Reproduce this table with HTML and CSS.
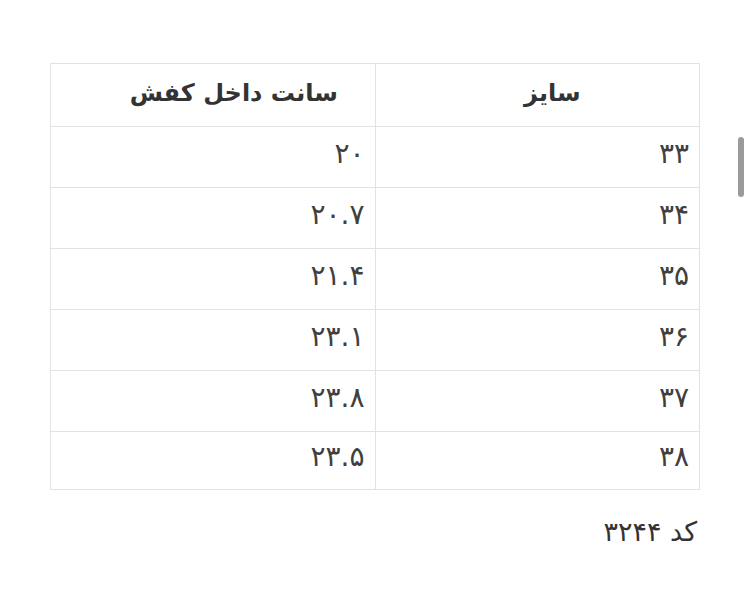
FILE: index.html
```html
<!DOCTYPE html>
<html lang="fa" dir="rtl">
<head>
<meta charset="utf-8">
<link rel="stylesheet" href="styles.css">
</head>
<body>
<div class="page">
  <table class="sizes">
    <colgroup><col class="col"><col class="col"></colgroup>
    <thead>
      <tr><th class="c1">سایز</th><th class="c2">سانت داخل کفش</th></tr>
    </thead>
    <tbody>
      <tr><td>۳۳</td><td>۲۰</td></tr>
      <tr><td>۳۴</td><td>۲۰.۷</td></tr>
      <tr><td>۳۵</td><td>۲۱.۴</td></tr>
      <tr><td>۳۶</td><td>۲۳.۱</td></tr>
      <tr><td>۳۷</td><td>۲۳.۸</td></tr>
      <tr><td>۳۸</td><td>۲۳.۵</td></tr>
    </tbody>
  </table>
  <p class="code">کد ۳۲۴۴</p>
</div>
<div class="scrollbar"></div>
</body>
</html>
```
FILE: styles.css
```css
html, body {
  margin: 0;
  padding: 0;
  background: #fff;
}
body {
  font-family: "DejaVu Sans", "Noto Sans", sans-serif;
  color: #3a3a3a;
}
.page {
  padding: 63px 50px 0 50px;
}
.sizes {
  width: 650px;
  border-collapse: collapse;
  table-layout: fixed;
}
.sizes .col { width: 50%; }
.sizes th, .sizes td {
  box-sizing: border-box;
  border: 1px solid #e2e2e2;
}
.sizes th {
  height: 63px;
  font-size: 24px;
  font-weight: bold;
  color: #333;
  text-align: center;
  padding: 0 0 4px 0;
}
.sizes th.c1 { padding-left: 30px; }
.sizes th.c2 { padding-left: 42px; }
.sizes td {
  height: 61px;
  font-size: 28px;
  color: #404040;
  text-align: right;
  padding: 0 10px 8px 10px;
}
.sizes tbody tr:last-child td { height: 58px; }
.code {
  margin: 26px 3px 0 0;
  font-size: 27px;
  color: #333;
}
.scrollbar {
  position: fixed;
  right: 6px;
  top: 137px;
  width: 6px;
  height: 60px;
  border-radius: 3px;
  background: #9a9a9a;
}
```
